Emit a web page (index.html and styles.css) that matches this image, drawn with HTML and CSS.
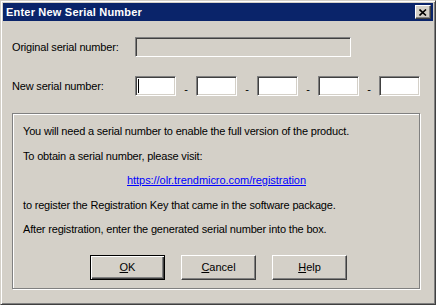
FILE: index.html
```html
<!DOCTYPE html>
<html lang="en">
<head>
    <meta charset="UTF-8">
    <title>Enter New Serial Number</title>
    <link rel="stylesheet" href="styles.css">
</head>
<body>
    <div class="window">
        <div class="titlebar">
            <span class="title">Enter New Serial Number</span>
            <span class="close">
                <svg width="8" height="7" viewBox="0 0 8 7">
                    <path d="M0.5 0.5 L7 6.5 M7 0.5 L0.5 6.5" stroke="#000" stroke-width="1.6" fill="none"/>
                </svg>
            </span>
        </div>

        <div class="content">
            <div class="row first">
                <label class="label">Original serial number:</label>
                <div class="field disabled wide"></div>
            </div>

            <div class="row second">
                <label class="label">New serial number:</label>
                <div class="serials">
                    <div class="field small"><span class="caret"></span></div>
                    <span class="dash">-</span>
                    <div class="field small"></div>
                    <span class="dash">-</span>
                    <div class="field small"></div>
                    <span class="dash">-</span>
                    <div class="field small"></div>
                    <span class="dash">-</span>
                    <div class="field small"></div>
                </div>
            </div>

            <div class="group">
                <p class="line">You will need a serial number to enable the full version of the product.</p>
                <p class="line">To obtain a serial number, please visit:</p>
                <p class="line center"><a class="link" href="#">https://olr.trendmicro.com/registration</a></p>
                <p class="line">to register the Registration Key that came in the software package.</p>
                <p class="line">After registration, enter the generated serial number into the box.</p>

                <div class="buttons">
                    <button class="btn default"><u>O</u>K</button>
                    <button class="btn"><u>C</u>ancel</button>
                    <button class="btn"><u>H</u>elp</button>
                </div>
            </div>
        </div>
    </div>
</body>
</html>
```

FILE: styles.css
```css
body {
    margin: 0;
    padding: 0;
    background-color: #d4d0c8;
    font-family: "Liberation Sans", Arial, sans-serif;
    font-size: 11px;
    letter-spacing: -0.18px;
    color: #000;
}

.window {
    width: 436px;
    height: 305px;
    box-sizing: border-box;
    background-color: #d4d0c8;
    border: 1px solid;
    border-color: #d4d0c8 #404040 #404040 #d4d0c8;
    box-shadow: inset 1px 1px 0 #fff, inset -1px -1px 0 #808080;
    padding: 2px;
}

.titlebar {
    height: 18px;
    background-color: #0a246a;
    display: flex;
    align-items: center;
    justify-content: space-between;
    padding: 0 2px 0 3px;
}

.title {
    color: #fff;
    font-weight: bold;
    font-size: 11px;
    letter-spacing: 0.2px;
}

.close {
    width: 16px;
    height: 14px;
    box-sizing: border-box;
    background-color: #d4d0c8;
    border: 1px solid;
    border-color: #fff #404040 #404040 #fff;
    box-shadow: inset -1px -1px 0 #808080;
    display: flex;
    align-items: center;
    justify-content: center;
}

.content {
    padding: 0 12px 0 9px;
}

.row {
    display: flex;
    align-items: center;
}

.row.first {
    margin-top: 16px;
}

.row.second {
    margin-top: 19px;
}

.label {
    width: 123px;
    flex: none;
}

.field {
    height: 20px;
    box-sizing: border-box;
    background-color: #fff;
    border: 1px solid;
    border-color: #808080 #fff #fff #808080;
    box-shadow: inset 1px 1px 0 #404040, inset -1px -1px 0 #d4d0c8;
    position: relative;
}

.field.disabled {
    background-color: #d4d0c8;
}

.field.wide {
    width: 216px;
}

.field.small {
    width: 41px;
}

.caret {
    position: absolute;
    left: 2px;
    top: 2px;
    width: 1px;
    height: 14px;
    background-color: #000;
}

.serials {
    display: flex;
    align-items: center;
}

.dash {
    width: 20px;
    text-align: center;
    padding-top: 5px;
}

.group {
    margin-top: 17px;
    width: 408px;
    height: 176px;
    box-sizing: border-box;
    border: 1px solid #808080;
    box-shadow: 1px 1px 0 #fff, inset 1px 1px 0 #fff;
    padding: 5px 9px 0 10px;
}

.line {
    margin: 0;
    height: 24.5px;
    line-height: 24.5px;
    white-space: nowrap;
}

.center {
    text-align: center;
}

.link {
    color: #0000ff;
    text-decoration: underline;
    letter-spacing: -0.05px;
}

.buttons {
    display: flex;
    gap: 16px;
    margin-top: 13px;
    padding-left: 67px;
}

.btn {
    width: 75px;
    height: 25px;
    box-sizing: border-box;
    background-color: #d4d0c8;
    font-family: "Liberation Sans", Arial, sans-serif;
    font-size: 11px;
    color: #000;
    border: 1px solid;
    border-color: #fff #404040 #404040 #fff;
    box-shadow: inset -1px -1px 0 #808080;
    padding: 0;
}

.btn.default {
    border-color: #000;
    box-shadow: inset 1px 1px 0 #fff, inset -1px -1px 0 #404040, inset -2px -2px 0 #808080;
}
```
